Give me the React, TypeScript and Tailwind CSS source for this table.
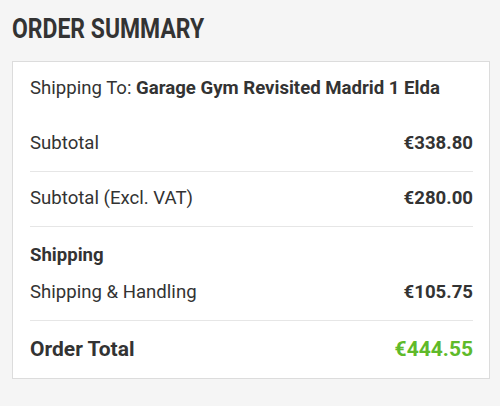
const rowText = "text-[18.6px] text-[#333]";

function Row({ label, value, className = "" }: { label: string; value: string; className?: string }) {
  return (
    <div className={`flex items-center justify-between ${className}`}>
      <span className={rowText}>{label}</span>
      <span className="text-[18.6px] font-bold text-[#333]">{value}</span>
    </div>
  );
}

export default function App() {
  return (
    <div className="min-h-[406px] w-[500px] bg-[#f5f5f5] pl-3 pt-[9px] font-['Roboto',sans-serif]">
      <h2 className="h-[40px] leading-[40px] text-[27px] font-bold text-[#333]">
        <span className="inline-block origin-left scale-x-[0.85] whitespace-nowrap">ORDER SUMMARY</span>
      </h2>
      <div className="mt-[12px] w-[478px] border border-[#dcdcdc] bg-white pl-[17px] pr-[16px]">
        <div className="flex h-[54px] items-center">
          <span className={rowText}>
            Shipping To: <span className="font-bold">Garage Gym Revisited Madrid 1 Elda</span>
          </span>
        </div>
        <Row label="Subtotal" value="€338.80" className="h-[55px]" />
        <div className="border-t border-[#e6e6e6]">
          <Row label="Subtotal (Excl. VAT)" value="€280.00" className="h-[54px]" />
        </div>
        <div className="border-t border-[#e6e6e6] pt-[16px] pb-[15px]">
          <div className="text-[18.6px] font-bold leading-[24px] text-[#333]">Shipping</div>
          <Row label="Shipping & Handling" value="€105.75" className="mt-[14px] h-[24px]" />
        </div>
        <div className="flex h-[58px] items-center justify-between border-t border-[#e6e6e6]">
          <span className="text-[21px] font-bold text-[#333]">Order Total</span>
          <span className="text-[21px] font-bold text-[#5fba2a]">€444.55</span>
        </div>
      </div>
    </div>
  );
}
